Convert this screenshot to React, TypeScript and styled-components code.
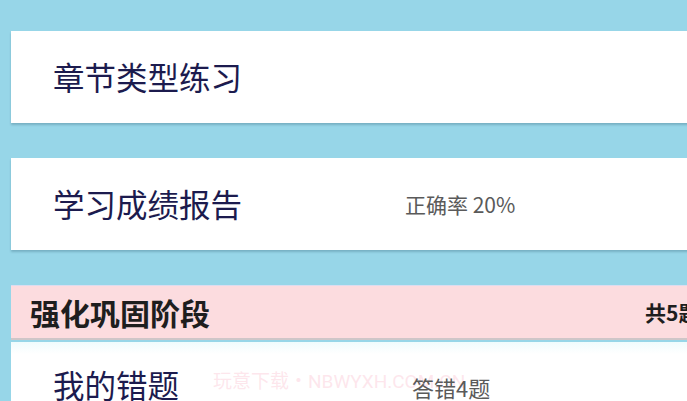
import styled, { createGlobalStyle } from 'styled-components';

const GlobalStyle = createGlobalStyle`
    html, body {
        margin: 0;
        padding: 0;
        overflow: hidden;
        background: #97d6e8;
    }
    body {
        font-family: 'Noto Sans CJK SC', 'Noto Sans', sans-serif;
    }
`;

const Page = styled.div`
    width: 760px; // wider than the window, the cards run off the right edge
    height: 401px;
    padding: 31px 0 0 11px;
    box-sizing: border-box;
    display: flex;
    flex-direction: column;
    position: relative;
    overflow: hidden;
`;

const Card = styled.div<{ $gapAfter?: number }>`
    height: 92px;
    background: #ffffff;
    display: flex;
    align-items: center;
    padding-left: 42px;
    margin-bottom: ${props => props.$gapAfter ?? 35}px;
    box-shadow: 0 2px 2px rgba(60, 110, 130, 0.35);
    flex-shrink: 0;
`;

const Title = styled.span<{ $width?: number }>`
    width: ${props => props.$width ?? 352}px;
    flex-shrink: 0;
    font-size: 31.5px;
    line-height: 1;
    color: #1c1b4e;
`;

const Value = styled.span<{ $size?: number }>`
    font-size: ${props => props.$size ?? 21}px;
    color: #5a5a5a;
    line-height: 1;
    position: relative;
    z-index: 1;
`;

const SectionHeader = styled.div`
    height: 55px;
    background: #fcdcdf;
    border-top: 1px solid #dcdcef;
    border-bottom: 2px solid #cfc6c8;
    box-sizing: border-box;
    display: flex;
    align-items: center;
    justify-content: space-between;
    padding: 0 0 0 19px;
    flex-shrink: 0;
`;

const SectionTitle = styled.span`
    font-size: 30px;
    font-weight: 700;
    color: #1e1e1e;
    line-height: 1;
`;

const SectionCount = styled.span`
    width: 115px;
    font-size: 21px;
    font-weight: 700;
    color: #1e1e1e;
`;

const ListCard = styled(Card)`
    margin-top: 2px;
    background: linear-gradient(#effcfd, #ffffff 12px);
    box-shadow: none;
    align-items: flex-start;
    padding-top: 27px;
    box-sizing: border-box;
`;

const Watermark = styled.span`
    position: absolute;
    left: 213px;
    top: 366px;
    font-size: 19px;
    color: rgba(252, 214, 224, 0.6);
    font-family: 'Roboto', 'Noto Sans CJK SC', sans-serif;
    white-space: nowrap;
    pointer-events: none;
`;

const App = () => {
    return (
        <>
            <GlobalStyle />
            <Page>
                <Card>
                    <Title>章节类型练习</Title>
                </Card>
                <Card>
                    <Title>学习成绩报告</Title>
                    <Value>正确率 20%</Value>
                </Card>
                <SectionHeader>
                    <SectionTitle>强化巩固阶段</SectionTitle>
                    <SectionCount>共5题</SectionCount>
                </SectionHeader>
                <ListCard $gapAfter={0}>
                    <Title $width={359}>我的错题</Title>
                    <Value $size={22} style={{ paddingTop: 7 }}>答错4题</Value>
                </ListCard>
                <Watermark>玩意下载・NBWYXH.COM.CN</Watermark>
            </Page>
        </>
    );
};

export default App;
